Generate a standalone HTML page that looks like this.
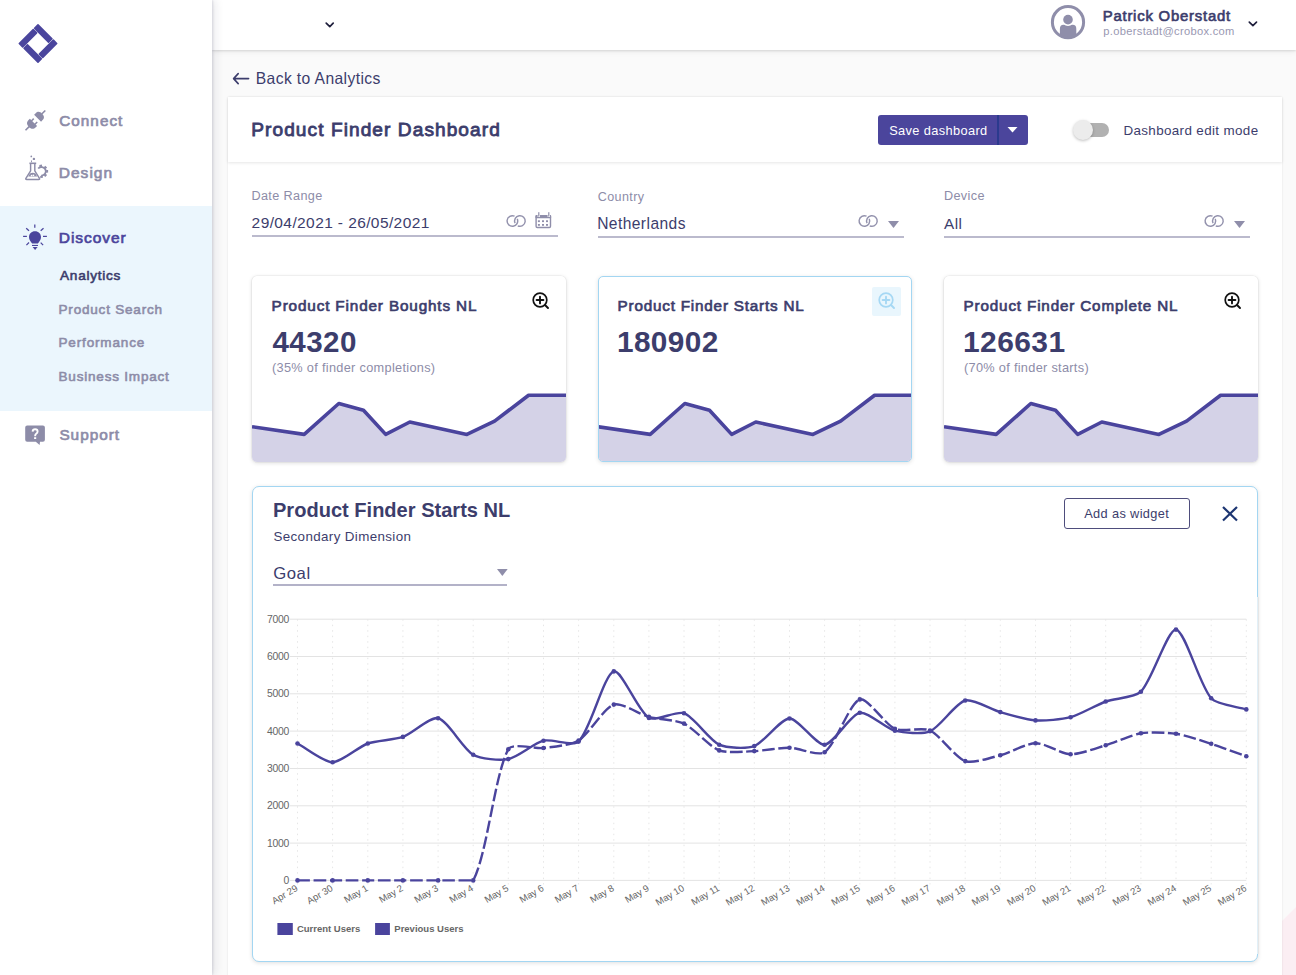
<!DOCTYPE html>
<html><head><meta charset="utf-8"><title>Product Finder Dashboard</title>
<style>
html,body{margin:0;padding:0;}
body{width:1296px;height:975px;overflow:hidden;position:relative;background:#fff;font-family:"Liberation Sans", sans-serif;}
.t{position:absolute;white-space:nowrap;line-height:1;}
svg{overflow:visible}
</style></head><body>
<div style="position:absolute;left:212px;top:0;width:1084px;height:975px;background:#fafafa"></div>
<svg style="position:absolute;left:1270px;top:880px" width="26" height="95"><polygon points="0,53 26,27 26,95 0,95" fill="#fbeef3"/></svg>
<div style="position:absolute;left:228px;top:97px;width:1054px;height:900px;background:#fff;box-shadow:0 0 2px rgba(0,0,0,0.10)"></div>
<div style="position:absolute;left:228px;top:97px;width:1054px;height:65px;background:#fff;box-shadow:0 1px 3px rgba(0,0,0,0.10)"></div>
<div style="position:absolute;left:212px;top:0;width:1084px;height:50px;background:#fff;box-shadow:0 1px 2px rgba(0,0,0,0.11), 0 2px 6px rgba(0,0,0,0.06)"></div>
<div style="position:absolute;left:0;top:0;width:211.5px;height:975px;background:#fff;box-shadow:1px 0 2px rgba(30,30,70,0.12), 3px 0 9px rgba(30,30,70,0.10)"></div>
<div style="position:absolute;left:0;top:206px;width:211.5px;height:205px;background:#ebf6fd"></div>
<svg style="position:absolute;left:0;top:0" width="80" height="80"><g transform="translate(38,43.5) rotate(45)" fill="#4a459d">
<rect x="-14" y="-14" width="21.3" height="6.4" rx="0.8"/>
<rect x="7.7" y="-14" width="6.3" height="21.3" rx="0.8"/>
<rect x="-7.3" y="7.6" width="21.3" height="6.4" rx="0.8"/>
<rect x="-14" y="-7.3" width="6.3" height="21.3" rx="0.8"/>
</g></svg>
<svg style="position:absolute;left:20px;top:104px" width="32" height="32" viewBox="0 0 32 32"><g transform="translate(15.4,16.4) rotate(-45)" fill="#8d8ca8">
<path d="M3.1,-4.9 L5.3,-4.9 C8.6,-4.9 9.5,-2.6 9.5,0 C9.5,2.6 8.6,4.9 5.3,4.9 L3.1,4.9 Z"/>
<rect x="9" y="-0.8" width="5" height="1.6"/>
<path d="M-2.7,-5.1 L-4.6,-5.1 C-8.2,-5.1 -9.2,-2.6 -9.2,0 C-9.2,2.6 -8.2,5.1 -4.6,5.1 L-2.7,5.1 Z"/>
<rect x="-3.2" y="-3.2" width="3.3" height="1.5"/>
<rect x="-3.2" y="1.7" width="3.3" height="1.5"/>
<rect x="-14" y="-0.8" width="5.2" height="1.6"/>
</g></svg>
<svg style="position:absolute;left:20px;top:150px" width="32" height="34" viewBox="0 0 32 34">
<g fill="none" stroke="#8d8ca8" stroke-width="1.45" stroke-linejoin="round">
<path d="M10.6,14 V20.8 L5.9,28.3 Q5.3,29.5 6.7,29.5 H18.7 Q20.1,29.5 19.5,28.3 L14.8,20.8 V14"/>
<path d="M9.4,13.3 H16.2" stroke-width="1.6"/>
<path d="M18.21,18.54 A4.3,4.3 0 1 1 21.13,25.58" stroke-width="1.8"/>
</g>
<g fill="#8d8ca8">
<path d="M8.2,26.6 L9.9,23.4 Q12.7,22.2 15.5,23.4 L17.2,26.6 Z"/>
<circle cx="11.3" cy="6.4" r="0.85"/><circle cx="13.9" cy="8.9" r="1.2"/><rect x="11" y="10.4" width="0.9" height="1.8"/>
<g transform="translate(21.5,21.3)"><rect x="-1.3" y="-6.6" width="2.6" height="2" transform="rotate(-8)"/><rect x="-1.3" y="-6.6" width="2.6" height="2" transform="rotate(45)"/><rect x="-1.3" y="-6.6" width="2.6" height="2" transform="rotate(90)"/><rect x="-1.3" y="-6.6" width="2.6" height="2" transform="rotate(135)"/><rect x="-1.3" y="-6.6" width="2.6" height="2" transform="rotate(180)"/></g>
</g>
<g fill="#fff"><circle cx="11.5" cy="25.6" r="0.8"/><rect x="12.6" y="24.6" width="1.6" height="1.4"/></g>
</svg>
<svg style="position:absolute;left:20px;top:220px" width="30" height="32" viewBox="0 0 30 32"><g fill="#4b459c" stroke="#4b459c" stroke-width="1.25" stroke-linecap="butt">
<line x1="14.8" y1="4.4" x2="14.8" y2="7.7"/>
<line x1="3.1" y1="16.4" x2="6.9" y2="16.4"/>
<line x1="23" y1="16.4" x2="26.9" y2="16.4"/>
<line x1="6.2" y1="8.2" x2="9" y2="10.7"/>
<line x1="23.5" y1="8.2" x2="20.7" y2="10.7"/>
<line x1="6.4" y1="25.1" x2="9" y2="22.5"/>
<line x1="23.1" y1="25.1" x2="20.7" y2="22.6"/>
<path d="M15,11.2 C18.5,11.2 21,13.8 21,17 C21,19.2 20,20.6 19.2,21.8 L17.9,23.6 H12.1 L10.8,21.8 C10,20.6 9,19.2 9,17 C9,13.8 11.5,11.2 15,11.2 Z" stroke="none"/>
<rect x="12" y="24.9" width="6" height="1.1" stroke="none"/>
<path d="M12.6,27.1 H17.6 L15.1,29.9 Z" stroke="none"/>
</g></svg>
<svg style="position:absolute;left:20px;top:420px" width="30" height="30" viewBox="0 0 30 30">
<path d="M7.2,5.5 H22.9 Q24.9,5.5 24.9,7.5 V19.7 Q24.9,21.7 22.9,21.7 H20 L19.6,25 L15.8,21.7 H7.2 Q5.2,21.7 5.2,19.7 V7.5 Q5.2,5.5 7.2,5.5 Z" fill="#8d8ca8"/>
<path d="M12.6,11.6 Q12.8,9.3 15.1,9.3 Q17.6,9.3 17.6,11.6 Q17.6,13 16.2,13.8 Q15.2,14.5 15.2,15.6 V16.3" fill="none" stroke="#fff" stroke-width="1.9"/>
<rect x="14.1" y="17.2" width="2.1" height="1.8" fill="#fff"/>
</svg>
<div class="t" style="left:59.24px;top:112.97px;font-size:15.27px;font-weight:400;color:#8d8ca8;letter-spacing:1.043px;-webkit-text-stroke:0.67px #8d8ca8;">Connect</div>
<div class="t" style="left:58.76px;top:164.67px;font-size:15.51px;font-weight:400;color:#8d8ca8;letter-spacing:1.026px;-webkit-text-stroke:0.68px #8d8ca8;">Design</div>
<div class="t" style="left:58.76px;top:229.95px;font-size:15.53px;font-weight:400;color:#4b459c;letter-spacing:0.934px;-webkit-text-stroke:0.68px #4b459c;">Discover</div>
<div class="t" style="left:60.00px;top:269.48px;font-size:13.6px;font-weight:400;color:#3c3d6c;letter-spacing:0.749px;-webkit-text-stroke:0.59px #3c3d6c;">Analytics</div>
<div class="t" style="left:58.52px;top:302.82px;font-size:13.56px;font-weight:400;color:#8d8ca8;letter-spacing:0.783px;-webkit-text-stroke:0.59px #8d8ca8;">Product Search</div>
<div class="t" style="left:58.52px;top:335.96px;font-size:13.51px;font-weight:400;color:#8d8ca8;letter-spacing:0.843px;-webkit-text-stroke:0.59px #8d8ca8;">Performance</div>
<div class="t" style="left:58.52px;top:369.53px;font-size:13.55px;font-weight:400;color:#8d8ca8;letter-spacing:0.782px;-webkit-text-stroke:0.59px #8d8ca8;">Business Impact</div>
<div class="t" style="left:59.38px;top:427.08px;font-size:15.38px;font-weight:400;color:#8d8ca8;letter-spacing:0.986px;-webkit-text-stroke:0.67px #8d8ca8;">Support</div>
<svg style="position:absolute;left:323px;top:19px" width="14" height="10"><path d="M3.2 4.2 L6.8 7.6 L10.2 4.2" fill="none" stroke="#1f1f3c" stroke-width="1.7" stroke-linecap="round" stroke-linejoin="round"/></svg>
<svg style="position:absolute;left:1048px;top:2px" width="40" height="40" viewBox="0 0 40 40">
<defs><clipPath id="avc"><circle cx="20" cy="20.2" r="15"/></clipPath></defs>
<g clip-path="url(#avc)"><path d="M11.9,40 V27 Q11.9,22.8 15.5,22.8 H24.7 Q28.3,22.8 28.3,27 V40 Z" fill="#8f8eaa"/></g>
<circle cx="20" cy="17.65" r="6.3" fill="#fff"/>
<circle cx="20" cy="17.65" r="4.8" fill="#8f8eaa"/>
<circle cx="20" cy="20.2" r="15.6" fill="none" stroke="#8f8eaa" stroke-width="3"/>
</svg>
<div class="t" style="left:1102.71px;top:9.07px;font-size:14.86px;font-weight:400;color:#3c3d6c;letter-spacing:0.791px;-webkit-text-stroke:0.65px #3c3d6c;">Patrick Oberstadt</div>
<div class="t" style="left:1103.33px;top:26.36px;font-size:11.15px;font-weight:400;color:#9998b2;letter-spacing:0.306px;">p.oberstadt@crobox.com</div>
<svg style="position:absolute;left:1246px;top:17px" width="14" height="12"><path d="M3.3 5.2 L6.9 8.6 L10.5 5.2" fill="none" stroke="#1f1f3c" stroke-width="1.7" stroke-linecap="round" stroke-linejoin="round"/></svg>
<svg style="position:absolute;left:230px;top:70px" width="22" height="18"><path d="M3.6 8.6 H18.6 M8.2 3.6 L3.6 8.6 L8.2 13.6" fill="none" stroke="#3c3d6c" stroke-width="1.6" stroke-linecap="round" stroke-linejoin="round"/></svg>
<div class="t" style="left:255.75px;top:70.83px;font-size:15.67px;font-weight:400;color:#3c3d6c;letter-spacing:0.388px;">Back to Analytics</div>
<div class="t" style="left:251.27px;top:120.13px;font-size:19.1px;font-weight:400;color:#3c3d6c;letter-spacing:1.069px;-webkit-text-stroke:0.84px #3c3d6c;">Product Finder Dashboard</div>
<div style="position:absolute;left:878px;top:115px;width:150px;height:30px;background:#4b459c;border-radius:3px"></div>
<div style="position:absolute;left:997.3px;top:115px;width:1.6px;height:30px;background:#2b3a8e"></div>
<svg style="position:absolute;left:1004px;top:124px" width="16" height="12"><path d="M3.5 3 H13.5 L8.5 8.5 Z" fill="#fff"/></svg>
<div class="t" style="left:889.19px;top:124.96px;font-size:12.8px;font-weight:400;color:#ffffff;letter-spacing:0.370px;">Save dashboard</div>
<div style="position:absolute;left:1082px;top:123px;width:27px;height:14px;border-radius:7px;background:#b1b1b1"></div>
<div style="position:absolute;left:1073px;top:120px;width:20px;height:20px;border-radius:10px;background:#ececec;box-shadow:0 1px 3px rgba(0,0,0,0.25)"></div>
<div class="t" style="left:1123.43px;top:124.05px;font-size:13.4px;font-weight:400;color:#3c3d6c;letter-spacing:0.368px;">Dashboard edit mode</div>
<div class="t" style="left:251.39px;top:190.29px;font-size:12.65px;font-weight:400;color:#8d8ca8;letter-spacing:0.384px;">Date Range</div>
<div class="t" style="left:251.62px;top:214.98px;font-size:15.5px;font-weight:400;color:#3c3d6c;letter-spacing:0.398px;">29/04/2021 - 26/05/2021</div>
<svg style="position:absolute;left:506.0px;top:214.1px" width="22" height="14" viewBox="0 0 22 14"><g fill="none" stroke="#9392ad" stroke-width="1.45"><path d="M11.24,4.84 A5.3,5.3 0 1 1 8.56,2.16"/><path d="M9.06,9.16 A5.3,5.3 0 1 1 11.74,11.84"/></g></svg>
<svg style="position:absolute;left:534px;top:212px" width="19" height="18" viewBox="0 0 19 18"><g fill="#8f8eaa">
<rect x="2.1" y="3.7" width="14.4" height="11.8" rx="1.2" fill="none" stroke="#8f8eaa" stroke-width="1.4"/>
<rect x="1.4" y="3" width="15.8" height="3.2" rx="1"/>
<rect x="3.6" y="0.2" width="2.4" height="4.8" fill="#fff"/><rect x="13.6" y="0.2" width="2.4" height="4.8" fill="#fff"/>
<rect x="4.2" y="0.2" width="1.2" height="4.4"/><rect x="14.2" y="0.2" width="1.2" height="4.4"/>
<rect x="3.9" y="8.3" width="2" height="1.8"/><rect x="8" y="8.3" width="2" height="1.8"/><rect x="12" y="8.3" width="2" height="1.8"/>
<rect x="3.9" y="12" width="2" height="1.8"/><rect x="8" y="12" width="2" height="1.8"/><rect x="12" y="12" width="2" height="1.8"/>
</g></svg>
<div style="position:absolute;left:252px;top:235px;width:306px;height:2px;background:#bbbacd"></div>
<div class="t" style="left:597.77px;top:190.57px;font-size:12.55px;font-weight:400;color:#8d8ca8;letter-spacing:0.381px;">Country</div>
<div class="t" style="left:597.15px;top:216.01px;font-size:15.58px;font-weight:400;color:#3c3d6c;letter-spacing:0.431px;">Netherlands</div>
<svg style="position:absolute;left:858.0px;top:214.1px" width="22" height="14" viewBox="0 0 22 14"><g fill="none" stroke="#9392ad" stroke-width="1.45"><path d="M11.24,4.84 A5.3,5.3 0 1 1 8.56,2.16"/><path d="M9.06,9.16 A5.3,5.3 0 1 1 11.74,11.84"/></g></svg>
<svg style="position:absolute;left:888.4px;top:221px" width="11" height="7"><path d="M0 0 H11 L5.5 7 Z" fill="#8f8eaa"/></svg>
<div style="position:absolute;left:598px;top:236px;width:306px;height:2px;background:#bbbacd"></div>
<div class="t" style="left:943.89px;top:190.48px;font-size:12.66px;font-weight:400;color:#8d8ca8;letter-spacing:0.395px;">Device</div>
<div class="t" style="left:944.10px;top:216.25px;font-size:15.3px;font-weight:400;color:#3c3d6c;letter-spacing:0.424px;">All</div>
<svg style="position:absolute;left:1204.0px;top:214.1px" width="22" height="14" viewBox="0 0 22 14"><g fill="none" stroke="#9392ad" stroke-width="1.45"><path d="M11.24,4.84 A5.3,5.3 0 1 1 8.56,2.16"/><path d="M9.06,9.16 A5.3,5.3 0 1 1 11.74,11.84"/></g></svg>
<svg style="position:absolute;left:1234.4px;top:221px" width="11" height="7"><path d="M0 0 H11 L5.5 7 Z" fill="#8f8eaa"/></svg>
<div style="position:absolute;left:944px;top:236px;width:306px;height:2px;background:#bbbacd"></div>
<div style="position:absolute;left:252px;top:276px;width:314px;height:186px;box-sizing:border-box;background:#fff;border-radius:5px;overflow:hidden;box-shadow:0 0 0 0.6px rgba(0,0,0,0.06), 0 1px 4px rgba(0,0,0,0.14);">
<svg style="position:absolute;left:0px;top:0px" width="314" height="186"><polygon points="0.0,150.7 52.2,158.4 86.8,127.5 111.5,134.3 133.7,158.4 157.8,146.0 214.9,158.4 242.6,145.1 276.6,119.2 314.0,119.2 314,186 0,186" fill="#d4d2e7"/><polyline points="0.0,150.7 52.2,158.4 86.8,127.5 111.5,134.3 133.7,158.4 157.8,146.0 214.9,158.4 242.6,145.1 276.6,119.2 314.0,119.2" fill="none" stroke="#4a449d" stroke-width="3.6" stroke-linejoin="round"/></svg></div>
<div class="t" style="left:271.58px;top:298.35px;font-size:15.3px;font-weight:400;color:#3c3d6c;letter-spacing:0.849px;-webkit-text-stroke:0.67px #3c3d6c;">Product Finder Boughts NL</div>
<div class="t" style="left:272.50px;top:327.26px;font-size:29.57px;font-weight:700;color:#3c3d6c;letter-spacing:0.409px;">44320</div>
<div class="t" style="left:272.04px;top:362.11px;font-size:12.74px;font-weight:400;color:#8d8ca8;letter-spacing:0.310px;">(35% of finder completions)</div>
<svg style="position:absolute;left:528px;top:287.8px" width="24" height="24" viewBox="0 0 24 24"><g fill="none" stroke="#111" stroke-width="1.7" stroke-linecap="round">
<circle cx="12" cy="12" r="6.8"/><line x1="8.6" y1="12" x2="15.4" y2="12" stroke-width="1.9"/><line x1="12" y1="8.6" x2="12" y2="15.4" stroke-width="1.9"/><line x1="17" y1="17" x2="20" y2="20" stroke-width="1.9"/></g></svg>
<div style="position:absolute;left:598px;top:276px;width:314px;height:186px;box-sizing:border-box;background:#fff;border-radius:5px;overflow:hidden;border:1.3px solid #a3d6f2;box-shadow:0 1px 4px rgba(0,0,0,0.12);">
<svg style="position:absolute;left:-1px;top:-1px" width="314" height="186"><polygon points="0.0,150.7 52.2,158.4 86.8,127.5 111.5,134.3 133.7,158.4 157.8,146.0 214.9,158.4 242.6,145.1 276.6,119.2 314.0,119.2 314,186 0,186" fill="#d4d2e7"/><polyline points="0.0,150.7 52.2,158.4 86.8,127.5 111.5,134.3 133.7,158.4 157.8,146.0 214.9,158.4 242.6,145.1 276.6,119.2 314.0,119.2" fill="none" stroke="#4a449d" stroke-width="3.6" stroke-linejoin="round"/></svg></div>
<div class="t" style="left:617.58px;top:298.40px;font-size:15.24px;font-weight:400;color:#3c3d6c;letter-spacing:0.805px;-webkit-text-stroke:0.67px #3c3d6c;">Product Finder Starts NL</div>
<div class="t" style="left:617.01px;top:327.10px;font-size:29.76px;font-weight:700;color:#3c3d6c;letter-spacing:0.391px;">180902</div>
<div style="position:absolute;left:872px;top:287px;width:28.5px;height:28.5px;background:#e9f6fd;border-radius:2px"></div>
<svg style="position:absolute;left:874px;top:288.1px" width="24" height="24" viewBox="0 0 24 24"><g fill="none" stroke="#a6d8f4" stroke-width="1.7" stroke-linecap="round">
<circle cx="12" cy="12" r="6.8"/><line x1="8.6" y1="12" x2="15.4" y2="12" stroke-width="1.9"/><line x1="12" y1="8.6" x2="12" y2="15.4" stroke-width="1.9"/><line x1="17" y1="17" x2="20" y2="20" stroke-width="1.9"/></g></svg>
<div style="position:absolute;left:944px;top:276px;width:314px;height:186px;box-sizing:border-box;background:#fff;border-radius:5px;overflow:hidden;box-shadow:0 0 0 0.6px rgba(0,0,0,0.06), 0 1px 4px rgba(0,0,0,0.14);">
<svg style="position:absolute;left:0px;top:0px" width="314" height="186"><polygon points="0.0,150.7 52.2,158.4 86.8,127.5 111.5,134.3 133.7,158.4 157.8,146.0 214.9,158.4 242.6,145.1 276.6,119.2 314.0,119.2 314,186 0,186" fill="#d4d2e7"/><polyline points="0.0,150.7 52.2,158.4 86.8,127.5 111.5,134.3 133.7,158.4 157.8,146.0 214.9,158.4 242.6,145.1 276.6,119.2 314.0,119.2" fill="none" stroke="#4a449d" stroke-width="3.6" stroke-linejoin="round"/></svg></div>
<div class="t" style="left:963.58px;top:298.42px;font-size:15.21px;font-weight:400;color:#3c3d6c;letter-spacing:0.851px;-webkit-text-stroke:0.67px #3c3d6c;">Product Finder Complete NL</div>
<div class="t" style="left:963.00px;top:326.90px;font-size:30.0px;font-weight:700;color:#3c3d6c;letter-spacing:0.395px;">126631</div>
<div class="t" style="left:964.03px;top:362.08px;font-size:12.78px;font-weight:400;color:#8d8ca8;letter-spacing:0.292px;">(70% of finder starts)</div>
<svg style="position:absolute;left:1220px;top:287.8px" width="24" height="24" viewBox="0 0 24 24"><g fill="none" stroke="#111" stroke-width="1.7" stroke-linecap="round">
<circle cx="12" cy="12" r="6.8"/><line x1="8.6" y1="12" x2="15.4" y2="12" stroke-width="1.9"/><line x1="12" y1="8.6" x2="12" y2="15.4" stroke-width="1.9"/><line x1="17" y1="17" x2="20" y2="20" stroke-width="1.9"/></g></svg>
<div style="position:absolute;left:252px;top:486px;width:1006px;height:476px;box-sizing:border-box;border:1.4px solid #a3d6f2;border-radius:7px;background:#fff;box-shadow:0 1px 4px rgba(0,0,0,0.13)"></div>
<div style="position:absolute;left:1256.7px;top:597px;width:1.3px;height:357px;background:#e2f0f8;box-shadow:1px 0 1px rgba(0,0,0,0.06)"></div>
<div class="t" style="left:273.00px;top:500.02px;font-size:20.06px;font-weight:700;color:#3c3d6c;letter-spacing:0.001px;">Product Finder Starts NL</div>
<div class="t" style="left:273.47px;top:530.08px;font-size:13.37px;font-weight:400;color:#3c3d6c;letter-spacing:0.377px;">Secondary Dimension</div>
<div class="t" style="left:273.16px;top:565.54px;font-size:16.72px;font-weight:400;color:#3c3d6c;letter-spacing:0.586px;">Goal</div>
<svg style="position:absolute;left:497.3px;top:569px" width="10.7" height="7"><path d="M0 0 H10.7 L5.35 7 Z" fill="#8f8eaa"/></svg>
<div style="position:absolute;left:273px;top:584px;width:234px;height:2px;background:#b3b2c8"></div>
<div style="position:absolute;left:1064px;top:498px;width:126px;height:31px;box-sizing:border-box;border:1.3px solid #4e4d7c;border-radius:3px"></div>
<div class="t" style="left:1084.20px;top:508.46px;font-size:12.8px;font-weight:400;color:#3c3d6c;letter-spacing:0.356px;">Add as widget</div>
<svg style="position:absolute;left:1220px;top:504px" width="20" height="20"><path d="M3 3 L17 16.5 M17 3 L3 16.5" stroke="#1d3672" stroke-width="2.2"/></svg>
<svg style="position:absolute;left:0;top:0" width="1296" height="975">
<line x1="290" y1="880.4" x2="1246.3" y2="880.4" stroke="#e3e3e3" stroke-width="1"/>
<text x="289" y="883.8" text-anchor="end" font-family="Liberation Sans" font-size="10.4" letter-spacing="-0.25" fill="#666">0</text>
<line x1="290" y1="843.1" x2="1246.3" y2="843.1" stroke="#e3e3e3" stroke-width="1"/>
<text x="289" y="846.5" text-anchor="end" font-family="Liberation Sans" font-size="10.4" letter-spacing="-0.25" fill="#666">1000</text>
<line x1="290" y1="805.8" x2="1246.3" y2="805.8" stroke="#e3e3e3" stroke-width="1"/>
<text x="289" y="809.2" text-anchor="end" font-family="Liberation Sans" font-size="10.4" letter-spacing="-0.25" fill="#666">2000</text>
<line x1="290" y1="768.5" x2="1246.3" y2="768.5" stroke="#e3e3e3" stroke-width="1"/>
<text x="289" y="771.9" text-anchor="end" font-family="Liberation Sans" font-size="10.4" letter-spacing="-0.25" fill="#666">3000</text>
<line x1="290" y1="731.1" x2="1246.3" y2="731.1" stroke="#e3e3e3" stroke-width="1"/>
<text x="289" y="734.5" text-anchor="end" font-family="Liberation Sans" font-size="10.4" letter-spacing="-0.25" fill="#666">4000</text>
<line x1="290" y1="693.8" x2="1246.3" y2="693.8" stroke="#e3e3e3" stroke-width="1"/>
<text x="289" y="697.2" text-anchor="end" font-family="Liberation Sans" font-size="10.4" letter-spacing="-0.25" fill="#666">5000</text>
<line x1="290" y1="656.5" x2="1246.3" y2="656.5" stroke="#e3e3e3" stroke-width="1"/>
<text x="289" y="659.9" text-anchor="end" font-family="Liberation Sans" font-size="10.4" letter-spacing="-0.25" fill="#666">6000</text>
<line x1="290" y1="619.2" x2="1246.3" y2="619.2" stroke="#e3e3e3" stroke-width="1"/>
<text x="289" y="622.6" text-anchor="end" font-family="Liberation Sans" font-size="10.4" letter-spacing="-0.25" fill="#666">7000</text>
<line x1="297.5" y1="619.2" x2="297.5" y2="884.4" stroke="#e6e6e6" stroke-width="1" stroke-dasharray="1.5,4"/>
<line x1="332.6" y1="619.2" x2="332.6" y2="884.4" stroke="#e6e6e6" stroke-width="1" stroke-dasharray="1.5,4"/>
<line x1="367.8" y1="619.2" x2="367.8" y2="884.4" stroke="#e6e6e6" stroke-width="1" stroke-dasharray="1.5,4"/>
<line x1="402.9" y1="619.2" x2="402.9" y2="884.4" stroke="#e6e6e6" stroke-width="1" stroke-dasharray="1.5,4"/>
<line x1="438.1" y1="619.2" x2="438.1" y2="884.4" stroke="#e6e6e6" stroke-width="1" stroke-dasharray="1.5,4"/>
<line x1="473.2" y1="619.2" x2="473.2" y2="884.4" stroke="#e6e6e6" stroke-width="1" stroke-dasharray="1.5,4"/>
<line x1="508.3" y1="619.2" x2="508.3" y2="884.4" stroke="#e6e6e6" stroke-width="1" stroke-dasharray="1.5,4"/>
<line x1="543.5" y1="619.2" x2="543.5" y2="884.4" stroke="#e6e6e6" stroke-width="1" stroke-dasharray="1.5,4"/>
<line x1="578.6" y1="619.2" x2="578.6" y2="884.4" stroke="#e6e6e6" stroke-width="1" stroke-dasharray="1.5,4"/>
<line x1="613.8" y1="619.2" x2="613.8" y2="884.4" stroke="#e6e6e6" stroke-width="1" stroke-dasharray="1.5,4"/>
<line x1="648.9" y1="619.2" x2="648.9" y2="884.4" stroke="#e6e6e6" stroke-width="1" stroke-dasharray="1.5,4"/>
<line x1="684.0" y1="619.2" x2="684.0" y2="884.4" stroke="#e6e6e6" stroke-width="1" stroke-dasharray="1.5,4"/>
<line x1="719.2" y1="619.2" x2="719.2" y2="884.4" stroke="#e6e6e6" stroke-width="1" stroke-dasharray="1.5,4"/>
<line x1="754.3" y1="619.2" x2="754.3" y2="884.4" stroke="#e6e6e6" stroke-width="1" stroke-dasharray="1.5,4"/>
<line x1="789.5" y1="619.2" x2="789.5" y2="884.4" stroke="#e6e6e6" stroke-width="1" stroke-dasharray="1.5,4"/>
<line x1="824.6" y1="619.2" x2="824.6" y2="884.4" stroke="#e6e6e6" stroke-width="1" stroke-dasharray="1.5,4"/>
<line x1="859.8" y1="619.2" x2="859.8" y2="884.4" stroke="#e6e6e6" stroke-width="1" stroke-dasharray="1.5,4"/>
<line x1="894.9" y1="619.2" x2="894.9" y2="884.4" stroke="#e6e6e6" stroke-width="1" stroke-dasharray="1.5,4"/>
<line x1="930.0" y1="619.2" x2="930.0" y2="884.4" stroke="#e6e6e6" stroke-width="1" stroke-dasharray="1.5,4"/>
<line x1="965.2" y1="619.2" x2="965.2" y2="884.4" stroke="#e6e6e6" stroke-width="1" stroke-dasharray="1.5,4"/>
<line x1="1000.3" y1="619.2" x2="1000.3" y2="884.4" stroke="#e6e6e6" stroke-width="1" stroke-dasharray="1.5,4"/>
<line x1="1035.5" y1="619.2" x2="1035.5" y2="884.4" stroke="#e6e6e6" stroke-width="1" stroke-dasharray="1.5,4"/>
<line x1="1070.6" y1="619.2" x2="1070.6" y2="884.4" stroke="#e6e6e6" stroke-width="1" stroke-dasharray="1.5,4"/>
<line x1="1105.7" y1="619.2" x2="1105.7" y2="884.4" stroke="#e6e6e6" stroke-width="1" stroke-dasharray="1.5,4"/>
<line x1="1140.9" y1="619.2" x2="1140.9" y2="884.4" stroke="#e6e6e6" stroke-width="1" stroke-dasharray="1.5,4"/>
<line x1="1176.0" y1="619.2" x2="1176.0" y2="884.4" stroke="#e6e6e6" stroke-width="1" stroke-dasharray="1.5,4"/>
<line x1="1211.2" y1="619.2" x2="1211.2" y2="884.4" stroke="#e6e6e6" stroke-width="1" stroke-dasharray="1.5,4"/>
<line x1="1246.3" y1="619.2" x2="1246.3" y2="884.4" stroke="#e6e6e6" stroke-width="1" stroke-dasharray="1.5,4"/>
<text transform="translate(298.5,889.9) rotate(-31)" text-anchor="end" font-family="Liberation Sans" font-size="9.6" fill="#666">Apr 29</text>
<text transform="translate(333.6,889.9) rotate(-31)" text-anchor="end" font-family="Liberation Sans" font-size="9.6" fill="#666">Apr 30</text>
<text transform="translate(368.8,889.9) rotate(-31)" text-anchor="end" font-family="Liberation Sans" font-size="9.6" fill="#666">May 1</text>
<text transform="translate(403.9,889.9) rotate(-31)" text-anchor="end" font-family="Liberation Sans" font-size="9.6" fill="#666">May 2</text>
<text transform="translate(439.1,889.9) rotate(-31)" text-anchor="end" font-family="Liberation Sans" font-size="9.6" fill="#666">May 3</text>
<text transform="translate(474.2,889.9) rotate(-31)" text-anchor="end" font-family="Liberation Sans" font-size="9.6" fill="#666">May 4</text>
<text transform="translate(509.3,889.9) rotate(-31)" text-anchor="end" font-family="Liberation Sans" font-size="9.6" fill="#666">May 5</text>
<text transform="translate(544.5,889.9) rotate(-31)" text-anchor="end" font-family="Liberation Sans" font-size="9.6" fill="#666">May 6</text>
<text transform="translate(579.6,889.9) rotate(-31)" text-anchor="end" font-family="Liberation Sans" font-size="9.6" fill="#666">May 7</text>
<text transform="translate(614.8,889.9) rotate(-31)" text-anchor="end" font-family="Liberation Sans" font-size="9.6" fill="#666">May 8</text>
<text transform="translate(649.9,889.9) rotate(-31)" text-anchor="end" font-family="Liberation Sans" font-size="9.6" fill="#666">May 9</text>
<text transform="translate(685.0,889.9) rotate(-31)" text-anchor="end" font-family="Liberation Sans" font-size="9.6" fill="#666">May 10</text>
<text transform="translate(720.2,889.9) rotate(-31)" text-anchor="end" font-family="Liberation Sans" font-size="9.6" fill="#666">May 11</text>
<text transform="translate(755.3,889.9) rotate(-31)" text-anchor="end" font-family="Liberation Sans" font-size="9.6" fill="#666">May 12</text>
<text transform="translate(790.5,889.9) rotate(-31)" text-anchor="end" font-family="Liberation Sans" font-size="9.6" fill="#666">May 13</text>
<text transform="translate(825.6,889.9) rotate(-31)" text-anchor="end" font-family="Liberation Sans" font-size="9.6" fill="#666">May 14</text>
<text transform="translate(860.8,889.9) rotate(-31)" text-anchor="end" font-family="Liberation Sans" font-size="9.6" fill="#666">May 15</text>
<text transform="translate(895.9,889.9) rotate(-31)" text-anchor="end" font-family="Liberation Sans" font-size="9.6" fill="#666">May 16</text>
<text transform="translate(931.0,889.9) rotate(-31)" text-anchor="end" font-family="Liberation Sans" font-size="9.6" fill="#666">May 17</text>
<text transform="translate(966.2,889.9) rotate(-31)" text-anchor="end" font-family="Liberation Sans" font-size="9.6" fill="#666">May 18</text>
<text transform="translate(1001.3,889.9) rotate(-31)" text-anchor="end" font-family="Liberation Sans" font-size="9.6" fill="#666">May 19</text>
<text transform="translate(1036.5,889.9) rotate(-31)" text-anchor="end" font-family="Liberation Sans" font-size="9.6" fill="#666">May 20</text>
<text transform="translate(1071.6,889.9) rotate(-31)" text-anchor="end" font-family="Liberation Sans" font-size="9.6" fill="#666">May 21</text>
<text transform="translate(1106.7,889.9) rotate(-31)" text-anchor="end" font-family="Liberation Sans" font-size="9.6" fill="#666">May 22</text>
<text transform="translate(1141.9,889.9) rotate(-31)" text-anchor="end" font-family="Liberation Sans" font-size="9.6" fill="#666">May 23</text>
<text transform="translate(1177.0,889.9) rotate(-31)" text-anchor="end" font-family="Liberation Sans" font-size="9.6" fill="#666">May 24</text>
<text transform="translate(1212.2,889.9) rotate(-31)" text-anchor="end" font-family="Liberation Sans" font-size="9.6" fill="#666">May 25</text>
<text transform="translate(1247.3,889.9) rotate(-31)" text-anchor="end" font-family="Liberation Sans" font-size="9.6" fill="#666">May 26</text>
<path d="M297.5,880.4 C306.3,880.4 323.9,880.4 332.6,880.4 C341.4,880.4 359.0,880.4 367.8,880.4 C376.6,880.4 394.1,880.4 402.9,880.4 C411.7,880.4 429.3,880.4 438.1,880.4 C446.8,880.4 469.6,880.4 473.2,880.4 C487.2,854.4 494.4,775.5 508.3,749.2 C512.0,742.4 534.8,749.1 543.5,748.0 C552.4,746.9 571.3,745.1 578.6,740.5 C588.9,734.2 603.7,708.0 613.8,704.6 C621.2,702.1 639.9,714.5 648.9,716.9 C657.5,719.3 676.2,719.9 684.0,723.6 C693.8,728.3 709.4,746.5 719.2,750.4 C727.0,753.4 745.6,751.5 754.3,751.1 C763.1,750.8 780.7,747.5 789.5,747.7 C798.3,747.8 818.3,756.5 824.6,752.2 C835.9,744.4 849.6,702.8 859.8,699.4 C867.1,697.0 885.0,724.4 894.9,728.8 C902.5,732.2 922.5,727.0 930.0,730.5 C940.0,735.1 955.2,757.6 965.2,761.1 C972.8,763.8 991.7,757.4 1000.3,755.2 C1009.3,753.0 1026.6,743.3 1035.5,743.2 C1044.2,743.0 1061.7,754.0 1070.6,754.2 C1079.3,754.5 1097.1,747.8 1105.7,745.2 C1114.6,742.6 1131.9,734.8 1140.9,733.3 C1149.4,732.0 1167.4,732.5 1176.0,733.8 C1185.0,735.1 1202.5,741.0 1211.2,743.8 C1220.0,746.6 1237.5,753.2 1246.3,756.3" fill="none" stroke="#4a449d" stroke-width="2.4" stroke-dasharray="12.5,3.6"/>
<path d="M297.5,743.5 C306.3,748.2 323.9,762.3 332.6,762.3 C341.4,762.3 358.5,746.8 367.8,743.5 C376.1,740.5 394.6,739.9 402.9,736.9 C412.2,733.6 430.3,716.3 438.1,718.2 C447.9,720.7 462.9,748.8 473.2,754.8 C480.4,759.0 500.1,760.8 508.3,759.1 C517.6,757.3 534.2,743.0 543.5,740.7 C551.7,738.6 573.2,746.9 578.6,741.6 C590.8,729.6 603.7,674.8 613.8,671.4 C621.3,668.9 638.0,711.4 648.9,717.9 C655.6,721.9 676.5,710.4 684.0,713.2 C694.1,717.0 709.1,739.9 719.2,744.7 C726.7,748.2 746.6,748.9 754.3,746.1 C764.2,742.4 780.6,718.7 789.5,718.5 C798.2,718.4 816.2,745.3 824.6,744.7 C833.7,743.9 850.2,714.7 859.8,712.8 C867.7,711.2 885.6,728.2 894.9,730.7 C903.2,732.8 922.5,734.5 930.0,731.3 C940.1,727.0 955.4,703.2 965.2,700.5 C972.9,698.4 991.4,709.6 1000.3,712.1 C1009.0,714.6 1026.6,719.8 1035.5,720.4 C1044.1,721.1 1062.2,719.4 1070.6,717.2 C1079.8,714.7 1096.7,704.8 1105.7,701.5 C1114.3,698.4 1134.9,697.8 1140.9,691.7 C1152.5,679.8 1167.6,628.8 1176.0,629.6 C1185.1,630.5 1199.3,684.8 1211.2,698.3 C1216.8,704.8 1237.5,706.7 1246.3,709.4" fill="none" stroke="#4a449d" stroke-width="2.4"/>
<circle cx="297.5" cy="743.5" r="2.3" fill="#4a449d"/>
<circle cx="332.6" cy="762.3" r="2.3" fill="#4a449d"/>
<circle cx="367.8" cy="743.5" r="2.3" fill="#4a449d"/>
<circle cx="402.9" cy="736.9" r="2.3" fill="#4a449d"/>
<circle cx="438.1" cy="718.2" r="2.3" fill="#4a449d"/>
<circle cx="473.2" cy="754.8" r="2.3" fill="#4a449d"/>
<circle cx="508.3" cy="759.1" r="2.3" fill="#4a449d"/>
<circle cx="543.5" cy="740.7" r="2.3" fill="#4a449d"/>
<circle cx="578.6" cy="741.6" r="2.3" fill="#4a449d"/>
<circle cx="613.8" cy="671.4" r="2.3" fill="#4a449d"/>
<circle cx="648.9" cy="717.9" r="2.3" fill="#4a449d"/>
<circle cx="684.0" cy="713.2" r="2.3" fill="#4a449d"/>
<circle cx="719.2" cy="744.7" r="2.3" fill="#4a449d"/>
<circle cx="754.3" cy="746.1" r="2.3" fill="#4a449d"/>
<circle cx="789.5" cy="718.5" r="2.3" fill="#4a449d"/>
<circle cx="824.6" cy="744.7" r="2.3" fill="#4a449d"/>
<circle cx="859.8" cy="712.8" r="2.3" fill="#4a449d"/>
<circle cx="894.9" cy="730.7" r="2.3" fill="#4a449d"/>
<circle cx="930.0" cy="731.3" r="2.3" fill="#4a449d"/>
<circle cx="965.2" cy="700.5" r="2.3" fill="#4a449d"/>
<circle cx="1000.3" cy="712.1" r="2.3" fill="#4a449d"/>
<circle cx="1035.5" cy="720.4" r="2.3" fill="#4a449d"/>
<circle cx="1070.6" cy="717.2" r="2.3" fill="#4a449d"/>
<circle cx="1105.7" cy="701.5" r="2.3" fill="#4a449d"/>
<circle cx="1140.9" cy="691.7" r="2.3" fill="#4a449d"/>
<circle cx="1176.0" cy="629.6" r="2.3" fill="#4a449d"/>
<circle cx="1211.2" cy="698.3" r="2.3" fill="#4a449d"/>
<circle cx="1246.3" cy="709.4" r="2.3" fill="#4a449d"/>
<circle cx="297.5" cy="880.4" r="2.3" fill="#4a449d"/>
<circle cx="332.6" cy="880.4" r="2.3" fill="#4a449d"/>
<circle cx="367.8" cy="880.4" r="2.3" fill="#4a449d"/>
<circle cx="402.9" cy="880.4" r="2.3" fill="#4a449d"/>
<circle cx="438.1" cy="880.4" r="2.3" fill="#4a449d"/>
<circle cx="473.2" cy="880.4" r="2.3" fill="#4a449d"/>
<circle cx="508.3" cy="749.2" r="2.3" fill="#4a449d"/>
<circle cx="543.5" cy="748.0" r="2.3" fill="#4a449d"/>
<circle cx="578.6" cy="740.5" r="2.3" fill="#4a449d"/>
<circle cx="613.8" cy="704.6" r="2.3" fill="#4a449d"/>
<circle cx="648.9" cy="716.9" r="2.3" fill="#4a449d"/>
<circle cx="684.0" cy="723.6" r="2.3" fill="#4a449d"/>
<circle cx="719.2" cy="750.4" r="2.3" fill="#4a449d"/>
<circle cx="754.3" cy="751.1" r="2.3" fill="#4a449d"/>
<circle cx="789.5" cy="747.7" r="2.3" fill="#4a449d"/>
<circle cx="824.6" cy="752.2" r="2.3" fill="#4a449d"/>
<circle cx="859.8" cy="699.4" r="2.3" fill="#4a449d"/>
<circle cx="894.9" cy="728.8" r="2.3" fill="#4a449d"/>
<circle cx="930.0" cy="730.5" r="2.3" fill="#4a449d"/>
<circle cx="965.2" cy="761.1" r="2.3" fill="#4a449d"/>
<circle cx="1000.3" cy="755.2" r="2.3" fill="#4a449d"/>
<circle cx="1035.5" cy="743.2" r="2.3" fill="#4a449d"/>
<circle cx="1070.6" cy="754.2" r="2.3" fill="#4a449d"/>
<circle cx="1105.7" cy="745.2" r="2.3" fill="#4a449d"/>
<circle cx="1140.9" cy="733.3" r="2.3" fill="#4a449d"/>
<circle cx="1176.0" cy="733.8" r="2.3" fill="#4a449d"/>
<circle cx="1211.2" cy="743.8" r="2.3" fill="#4a449d"/>
<circle cx="1246.3" cy="756.3" r="2.3" fill="#4a449d"/>
<rect x="277.4" y="923" width="15.4" height="12" fill="#4a449d"/>
<text x="296.9" y="932.2" font-family="Liberation Sans" font-weight="700" font-size="9.5" fill="#666">Current Users</text>
<rect x="375.1" y="923" width="14.8" height="12" fill="#4a449d"/>
<text x="394.3" y="932.2" font-family="Liberation Sans" font-weight="700" font-size="9.5" fill="#666">Previous Users</text>
</svg>
</body></html>
